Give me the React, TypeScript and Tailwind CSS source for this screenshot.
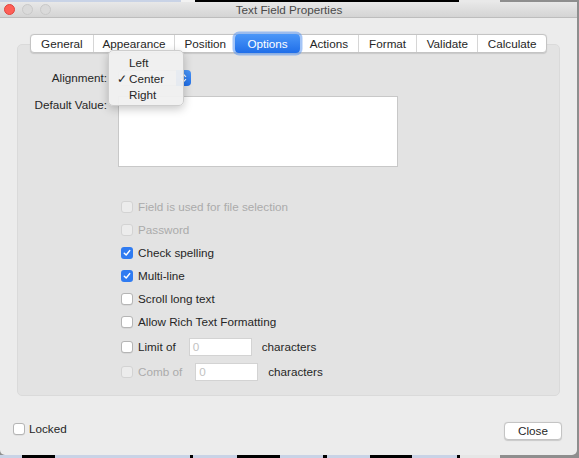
const font = { fontFamily: '"Liberation Sans", Arial, sans-serif' };

const tabs = [
  { label: "General", w: "w-[62px]" },
  { label: "Appearance", w: "w-[82px]" },
  { label: "Position", w: "w-[61px]" },
  { label: "Options", w: "w-[65px]", active: true },
  { label: "Actions", w: "w-[58px]" },
  { label: "Format", w: "w-[59px]" },
  { label: "Validate", w: "w-[61px]" },
  { label: "Calculate", w: "w-[69px]" },
];

function Check({ checked, disabled }: { checked?: boolean; disabled?: boolean }) {
  if (checked) {
    return (
      <span className="flex h-[12px] w-[12px] shrink-0 items-center justify-center rounded-[3px] bg-[#2f7bf1]">
        <svg width="8" height="8" viewBox="0 0 8 8">
          <path d="M1.3 4.2 L3.2 6 L6.7 1.6" fill="none" stroke="#fff" strokeWidth="1.5" strokeLinecap="round" strokeLinejoin="round" />
        </svg>
      </span>
    );
  }
  return (
    <span
      className={
        disabled
          ? "h-[12px] w-[12px] shrink-0 rounded-[3px] border border-[#d3d3d3] bg-[#ececec]"
          : "h-[12px] w-[12px] shrink-0 rounded-[3px] border border-[#b5b5b5] bg-white shadow-[0_0.5px_0.5px_rgba(0,0,0,0.1)]"
      }
    />
  );
}

function Row({ label, checked, disabled }: { label: string; checked?: boolean; disabled?: boolean }) {
  return (
    <div className="flex h-[23px] items-center gap-[5px]">
      <Check checked={checked} disabled={disabled} />
      <span className={disabled ? "text-[#ababab]" : "text-[#262626]"}>{label}</span>
    </div>
  );
}

function CountRow({ label, disabled }: { label: string; disabled?: boolean }) {
  return (
    <div className="flex h-[25px] items-center">
      <Check disabled={disabled} />
      <span className={`ml-[5px] ${disabled ? "text-[#ababab]" : "text-[#262626]"}`}>{label}</span>
      <div className="ml-[13px] flex h-[18px] w-[63px] items-center border border-[#d3d3d3] bg-white pl-[3px] text-[#c2c2c2]">0</div>
      <span className="ml-[10px] text-[#262626]">characters</span>
    </div>
  );
}

export default function App() {
  return (
    <div className="flex h-[458px] w-[579px] flex-col overflow-hidden bg-[#8e8e8e] text-[11.7px]" style={font}>
      {/* desktop behind the window, top */}
      <div className="flex h-[2px] shrink-0">
        <div className="w-[181px] bg-[#c9d3e6]" />
        <div className="w-[14px] bg-[#f2f2f2]" />
        <div className="w-[264px] bg-black" />
        <div className="w-[41px] bg-[#e9e9e9]" />
        <div className="flex-1 bg-[#8e8e8e]" />
      </div>

      <div className="flex flex-1">
        <div className="flex w-[577px] flex-col overflow-hidden rounded-b-[5px] bg-[#ececec]">
          {/* title bar */}
          <div className="relative flex h-[16px] shrink-0 items-center border-b border-[#bdbdbd] bg-gradient-to-b from-[#e8e8e8] to-[#d4d4d4]">
            <div className="flex items-center gap-[7px] pl-[4px]">
              <span className="h-[11px] w-[11px] rounded-full border border-[#e0443e] bg-[#fe5f57]" />
              <span className="h-[11px] w-[11px] rounded-full border border-[#c9c9c9] bg-[#dadada]" />
              <span className="h-[11px] w-[11px] rounded-full border border-[#c9c9c9] bg-[#dadada]" />
            </div>
            <div className="flex-1 pr-[50px] text-center text-[11.7px] text-[#4a4a4a]">Text Field Properties</div>
          </div>

          {/* body */}
          <div className="flex flex-1 flex-col px-[17px] pt-[16px]">
            <div className="relative z-10 ml-[13px] flex h-[19px] w-[517px] rounded-[4px] border border-[#c4c4c4] bg-white shadow-[0_0.5px_1px_rgba(0,0,0,0.12)]">
              {tabs.map((t, i) =>
                t.active ? (
                  <div
                    key={t.label}
                    className={`${t.w} -my-[1px] flex items-center justify-center rounded-[4px] bg-gradient-to-b from-[#4b97f8] to-[#1f6ee9] text-white shadow-[0_0_0_2.5px_rgba(90,150,240,0.55)]`}
                  >
                    {t.label}
                  </div>
                ) : (
                  <div
                    key={t.label}
                    className={`${t.w} flex items-center justify-center text-[#262626] ${i > 0 && !tabs[i - 1].active ? "border-l border-[#d6d6d6]" : ""}`}
                  >
                    {t.label}
                  </div>
                ),
              )}
            </div>

            <div className="-mt-[9px] flex h-[352px] w-[543px] flex-col rounded-[5px] border border-[#dadada] bg-[#e3e3e3] pt-[24px]">
              {/* alignment */}
              <div className="flex h-[18px] items-center">
                <span className="w-[89px] text-right text-[#262626]">Alignment:</span>
                <div className="relative ml-[11px] flex h-[16px] w-[73px] rounded-[4px] border border-[#c4c4c4] bg-white">
                  <div className="flex-1" />
                  <div className="-my-[1px] -mr-[1px] flex w-[15px] items-center justify-center rounded-r-[4px] bg-gradient-to-b from-[#4b97f8] to-[#1f6ee9]">
                    <svg width="7" height="10" viewBox="0 0 7 10">
                      <path d="M1 3.8 L3.5 1.3 L6 3.8 M1 6.2 L3.5 8.7 L6 6.2" fill="none" stroke="#fff" strokeWidth="1.2" />
                    </svg>
                  </div>
                  {/* open popup menu */}
                  <div className="absolute -left-[11px] -top-[21px] z-20 flex h-[56px] w-[76px] flex-col rounded-[5px] border border-[#cdcdcd] bg-[#f0f0f0]/95 pt-[4px] text-[#262626] shadow-[0_3px_10px_rgba(0,0,0,0.22)]">
                    <div className="flex h-[16px] items-center pl-[20px]">Left</div>
                    <div className="flex h-[16px] items-center">
                      <span className="w-[20px] pl-[8px]">✓</span>
                      <span>Center</span>
                    </div>
                    <div className="flex h-[16px] items-center pl-[20px]">Right</div>
                  </div>
                </div>
              </div>

              {/* default value */}
              <div className="mt-[9px] flex items-start">
                <span className="w-[89px] text-right text-[#262626]">Default Value:</span>
                <div className="ml-[11px] h-[71px] w-[280px] border border-[#c8c8c8] bg-white" />
              </div>

              {/* options */}
              <div className="ml-[103px] mt-[28px] flex flex-col">
                <Row label="Field is used for file selection" disabled />
                <Row label="Password" disabled />
                <Row label="Check spelling" checked />
                <Row label="Multi-line" checked />
                <Row label="Scroll long text" />
                <Row label="Allow Rich Text Formatting" />
                <div className="mt-[1px]">
                  <CountRow label="Limit of" />
                </div>
                <CountRow label="Comb of" disabled />
              </div>
            </div>

            {/* footer */}
            <div className="-ml-[4px] -mr-[2px] mt-[22px] flex items-center justify-between">
              <div className="flex items-center gap-[4px]">
                <Check />
                <span className="text-[#262626]">Locked</span>
              </div>
              <div className="mt-[4px] flex h-[18px] w-[58px] items-center justify-center rounded-[4px] border border-[#c4c4c4] bg-white text-[#262626] shadow-[0_0.5px_1px_rgba(0,0,0,0.15)]">
                Close
              </div>
            </div>
          </div>
        </div>
        <div className="flex-1 bg-[#8e8e8e]" />
      </div>

      {/* desktop behind the window, bottom */}
      <div className="flex h-[3px] shrink-0">
        <div className="w-[22px] bg-[#c9d3e6]" />
        <div className="w-[33px] bg-black" />
        <div className="w-[135px] bg-[#c9d3e6]" />
        <div className="w-[3px] bg-black" />
        <div className="w-[44px] bg-[#c9d3e6]" />
        <div className="w-[43px] bg-black" />
        <div className="w-[43px] bg-[#c9d3e6]" />
        <div className="w-[4px] bg-black" />
        <div className="w-[43px] bg-[#c9d3e6]" />
        <div className="w-[42px] bg-black" />
        <div className="w-[45px] bg-[#c9d3e6]" />
        <div className="w-[3px] bg-black" />
        <div className="w-[40px] bg-[#e6e6e6]" />
        <div className="flex-1 bg-[#8e8e8e]" />
      </div>
    </div>
  );
}
